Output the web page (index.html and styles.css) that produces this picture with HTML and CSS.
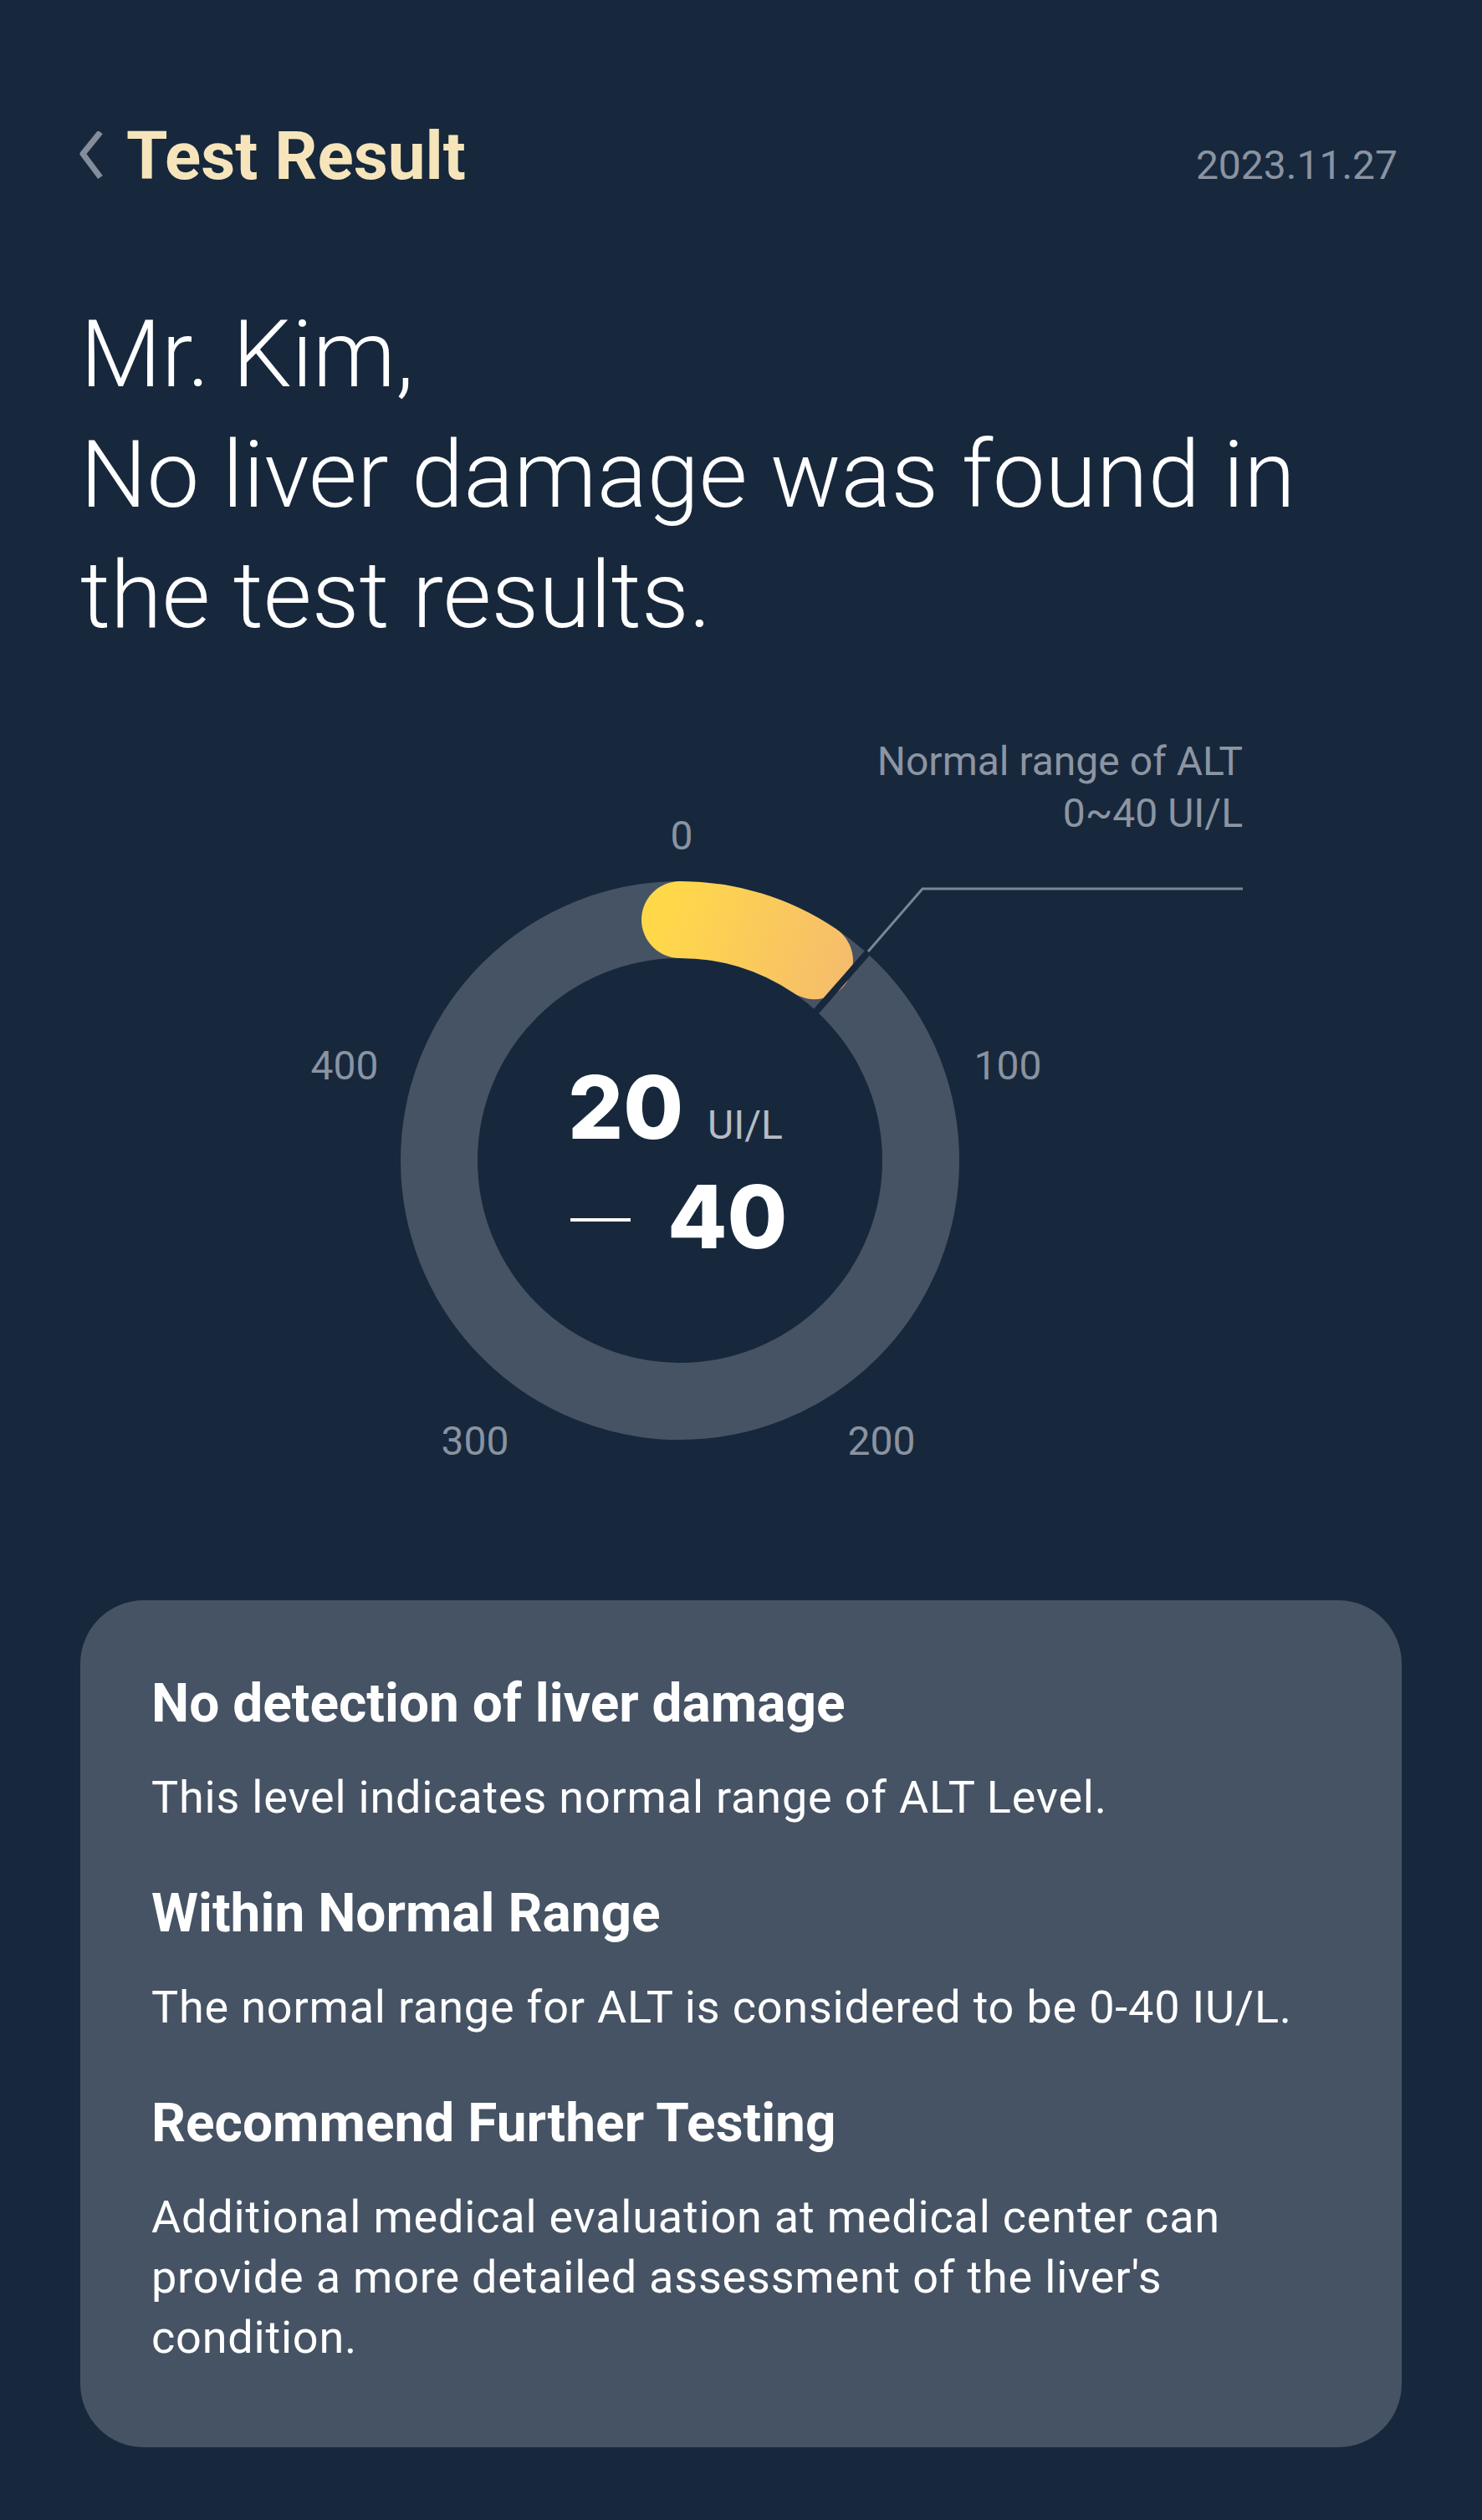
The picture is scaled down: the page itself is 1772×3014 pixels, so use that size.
FILE: index.html
```html
<!DOCTYPE html>
<html lang="en">
<head>
<meta charset="utf-8">
<title>Test Result</title>
<link rel="stylesheet" href="styles.css">
</head>
<body>
<main class="screen">
  <header class="topbar">
    <div class="back">
      <svg class="chev" width="32" height="60" viewBox="0 0 32 60" aria-hidden="true">
        <polyline points="28,1 7,27 28,55" fill="none" stroke="#838d9b" stroke-width="7" stroke-linejoin="round"/>
      </svg>
      <span class="title">Test Result</span>
    </div>
    <span class="date">2023.11.27</span>
  </header>

  <h1 class="greeting">Mr. Kim,<br>No liver damage was found in the test results.</h1>

  <section class="gauge">
    <svg class="gauge-svg" width="1580" height="1130" viewBox="96 0 1580 1130">
      <defs>
        <linearGradient id="arcGrad" gradientUnits="userSpaceOnUse" x1="790" y1="320" x2="1010" y2="400">
          <stop offset="0" stop-color="#ffd84a"/>
          <stop offset="1" stop-color="#f5bc6c"/>
        </linearGradient>
      </defs>
      <circle cx="813" cy="604" r="288" fill="none" stroke="#465364" stroke-width="92"/>
      <path d="M 813 316 A 288 288 0 0 1 974 365.2" fill="none" stroke="url(#arcGrad)" stroke-width="92" stroke-linecap="round"/>
      <line x1="1042" y1="350" x2="966" y2="437" stroke="#17283d" stroke-width="8"/>
      <polyline points="1038,354 1103,279 1486,279" fill="none" stroke="#7a8696" stroke-width="3"/>

      <text class="tick" x="815" y="232" text-anchor="middle">0</text>
      <text class="tick" x="412" y="507" text-anchor="middle">400</text>
      <text class="tick" x="1205" y="507" text-anchor="middle">100</text>
      <text class="tick" x="568" y="956" text-anchor="middle">300</text>
      <text class="tick" x="1054" y="956" text-anchor="middle">200</text>

      <text class="range" x="1486" y="143" text-anchor="end">Normal range of ALT</text>
      <text class="range" x="1486" y="205" text-anchor="end">0~40 UI/L</text>

      <text class="value" x="679" y="578">20</text>
      <text class="unit" x="846" y="578">UI/L</text>
      <rect x="682" y="673" width="72" height="4" fill="#ffffff"/>
      <text class="value" x="798" y="709">40</text>
    </svg>
  </section>

  <section class="card">
    <div class="item">
      <h3>No detection of liver damage</h3>
      <p>This level indicates normal range of ALT Level.</p>
    </div>
    <div class="item">
      <h3>Within Normal Range</h3>
      <p>The normal range for ALT is considered to be 0-40 IU/L.</p>
    </div>
    <div class="item">
      <h3>Recommend Further Testing</h3>
      <p>Additional medical evaluation at medical center can provide a more detailed assessment of the liver's condition.</p>
    </div>
  </section>
</main>
</body>
</html>
```

FILE: styles.css
```css
html, body {
  margin: 0;
  padding: 0;
}

body {
  background: #17283d;
  font-family: "Roboto", "Liberation Sans", sans-serif;
  color: #ffffff;
  min-height: 3014px;
}

.screen {
  width: 1772px;
  box-sizing: border-box;
  padding: 0 96px;
}

.topbar {
  display: flex;
  justify-content: space-between;
  align-items: baseline;
  padding-top: 139px;
}

.back {
  display: flex;
  align-items: baseline;
  gap: 27px;
  margin-left: -4px;
}

.chev {
  align-self: center;
  display: block;
}

.title {
  font-size: 80px;
  line-height: 96px;
  font-weight: 700;
  color: #f6e5ba;
}

.date {
  font-size: 48px;
  line-height: 58px;
  color: #8a93a1;
  margin-right: 5px;
}

.greeting {
  margin: 117px 0 0 0;
  font-size: 112px;
  line-height: 144px;
  font-weight: 300;
  color: #ffffff;
  max-width: 1560px;
}

.gauge {
  height: 1130px;
  margin: 0 -96px 0 0;
}

.gauge-svg {
  display: block;
}

.tick {
  font-family: "Roboto", "Liberation Sans", sans-serif;
  font-size: 48px;
  fill: #8a93a1;
}

.range {
  font-family: "Roboto", "Liberation Sans", sans-serif;
  font-size: 48px;
  fill: #8c95a2;
}

.value {
  font-family: "Inter", "DejaVu Sans", sans-serif;
  font-size: 104px;
  font-weight: 800;
  fill: #ffffff;
}

.unit {
  font-family: "Roboto", "Liberation Sans", sans-serif;
  font-size: 48px;
  fill: #b7bcc4;
}

.card {
  background: #465364;
  border-radius: 76px;
  padding: 84px 85px 95px 85px;
  display: flex;
  flex-direction: column;
  gap: 63px;
}

.item {
  display: flex;
  flex-direction: column;
  gap: 36px;
}

.item h3 {
  margin: 0;
  font-size: 64px;
  line-height: 80px;
  font-weight: 700;
  color: #ffffff;
}

.item p {
  margin: 0;
  font-size: 54px;
  line-height: 72px;
  font-weight: 400;
  letter-spacing: 0.8px;
  color: #ffffff;
}
```
